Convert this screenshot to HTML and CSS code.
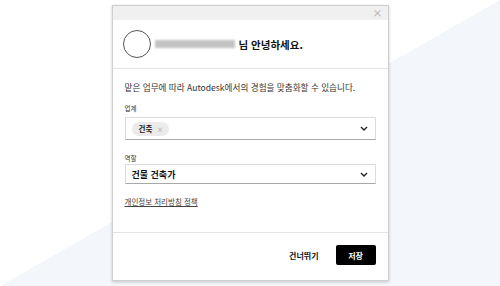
FILE: index.html
```html
<!DOCTYPE html>
<html lang="ko">
<head>
    <meta charset="UTF-8">
    <title>Autodesk - 프로필</title>
    <link rel="stylesheet" href="styles.css">
</head>
<body>
    <div class="modal">
        <div class="modal-top">
            <span class="close">&times;</span>
        </div>

        <header class="modal-head">
            <div class="avatar"></div>
            <div class="name-blur"></div>
            <h1>님 안녕하세요.</h1>
        </header>

        <div class="modal-body">
            <p class="intro">맡은 업무에 따라 Autodesk에서의 경험을 맞춤화할 수 있습니다.</p>

            <label class="field-label">업계</label>
            <div class="select select-multi">
                <span class="chip">건축 <span class="chip-x">&times;</span></span>
                <svg class="chevron" width="8" height="5" viewBox="0 0 8 5"><path d="M1 1l3 3 3-3" fill="none" stroke="#222" stroke-width="1.4"/></svg>
            </div>

            <label class="field-label second">역할</label>
            <div class="select">
                <span class="value">건물 건축가</span>
                <svg class="chevron" width="8" height="5" viewBox="0 0 8 5"><path d="M1 1l3 3 3-3" fill="none" stroke="#222" stroke-width="1.4"/></svg>
            </div>

            <a class="policy" href="#">개인정보 처리방침 정책</a>
        </div>

        <footer class="modal-foot">
            <button class="btn-skip">건너뛰기</button>
            <button class="btn-save">저장</button>
        </footer>
    </div>
</body>
</html>
```

FILE: styles.css
```css
body {
    margin: 0;
    height: 286px;
    display: flex;
    justify-content: center;
    align-items: center;
    font-family: "Noto Sans CJK KR", "Noto Sans", sans-serif;
    color: #222;
    background: linear-gradient(to top left, #f3f6fa 50%, #ffffff 50%);
}

.modal {
    width: 277px;
    height: 276px;
    box-sizing: border-box;
    background-color: #fff;
    border: 1px solid #cfcfcf;
    box-shadow: 0 1px 3px rgba(0, 0, 0, 0.2);
    display: flex;
    flex-direction: column;
}

.modal-top {
    height: 14px;
    background-color: #f0f0f0;
    display: flex;
    justify-content: flex-end;
    align-items: center;
    padding-right: 5px;
}

.close {
    color: #aaa;
    font-size: 10px;
    line-height: 10px;
}

.modal-head {
    height: 49px;
    box-sizing: border-box;
    border-bottom: 1px solid #e3e3e3;
    display: flex;
    align-items: center;
    padding-left: 10px;
}

.avatar {
    width: 26px;
    height: 26px;
    border: 1px solid #555;
    border-radius: 50%;
    margin-right: 4px;
}

.name-blur {
    width: 80px;
    height: 8px;
    background-color: #c2c2c2;
    filter: blur(1.3px);
    margin-right: 4px;
}

.modal-head h1 {
    margin: 0;
    font-size: 10.5px;
    font-weight: 700;
    color: #111;
}

.modal-body {
    flex: 1;
    padding: 12px 12px 0;
    display: flex;
    flex-direction: column;
}

.intro {
    margin: 0;
    font-size: 8.6px;
    line-height: 12px;
    color: #333;
}

.field-label {
    font-size: 6.5px;
    line-height: 10px;
    margin-top: 10px;
    margin-bottom: 4px;
    color: #333;
}

.field-label.second {
    margin-top: 13px;
    margin-bottom: 1px;
}

.select {
    height: 20px;
    box-sizing: border-box;
    border: 1px solid #dcdcdc;
    border-bottom-color: #a8a8a8;
    display: flex;
    align-items: center;
    justify-content: space-between;
    padding: 0 7px 0 6px;
}

.select-multi {
    height: 23px;
}

.chip {
    background-color: #ebebeb;
    border-radius: 7px;
    padding: 0 6px 0 7px;
    height: 14px;
    line-height: 14px;
    font-size: 7.5px;
    font-weight: 700;
}

.chip-x {
    font-weight: 400;
    color: #999;
    font-size: 7px;
    margin-left: 2px;
}

.value {
    font-size: 9px;
    font-weight: 700;
    color: #111;
}

.policy {
    margin-top: 13px;
    font-size: 7.5px;
    line-height: 10px;
    color: #444;
    text-decoration: underline;
    align-self: flex-start;
}

.modal-foot {
    height: 48px;
    box-sizing: border-box;
    border-top: 1px solid #e3e3e3;
    display: flex;
    justify-content: flex-end;
    align-items: center;
    gap: 17px;
    padding: 0 12px 3px 0;
}

.modal-foot button {
    font-family: inherit;
    font-size: 8px;
    font-weight: 700;
    border: none;
    cursor: pointer;
}

.btn-skip {
    background: none;
    color: #111;
    padding: 0;
}

.btn-save {
    background-color: #000;
    color: #fff;
    width: 40px;
    height: 20px;
    border-radius: 2px;
}
```
